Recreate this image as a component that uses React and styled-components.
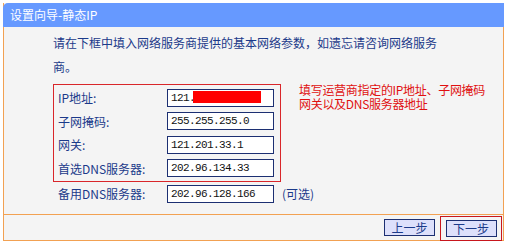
import React from "react";
import styled, { createGlobalStyle } from "styled-components";

const GlobalStyle = createGlobalStyle`
  html, body {
    margin: 0;
    padding: 0;
    background: #ffffff;
  }
  body {
    font-family: "Noto Sans CJK SC", "Liberation Sans", sans-serif;
    font-size: 12px;
  }
`;

const Frame = styled.div`
  margin: 3px 0 0 3px;
  width: 499px;
  height: 237px;
  border: 1px solid #f2a152;
  border-top: none;
  background: #f4f4f4;
  display: flex;
  flex-direction: column;
`;

const TitleBar = styled.div`
  height: 24px;
  margin: 0 -1px;
  background: #6699ff;
  border-top-left-radius: 5px;
  color: #ffffff;
  display: flex;
  align-items: center;
  padding-left: 7px;
  font-size: 12px;
  line-height: 24px;
`;

const Body = styled.div`
  flex: 1;
  padding: 4px 0 0 49px;
  color: #1b3a8a;
`;

const Intro = styled.p`
  margin: 0;
  line-height: 24px;
`;

const FormArea = styled.div`
  display: flex;
  align-items: flex-start;
  margin-top: 5px;
`;

const Fields = styled.div`
  display: flex;
  flex-direction: column;
  flex: none;
  width: 228px;
`;

const Highlight = styled.div`
  border: 1px solid #d9262a;
  padding: 1px 0;
`;

const Row = styled.div`
  display: flex;
  align-items: center;
  height: 23.5px;
  padding-left: ${(p) => (p.$outside ? "5px" : "4px")};
  white-space: nowrap;
`;

const Label = styled.span`
  width: 109px;
  flex: none;
  white-space: nowrap;
`;

const Field = styled.div`
  position: relative;
  width: 102px;
  height: 16px;
  border: 1px solid #1c2f72;
  background: #ffffff;
  color: #111;
  font-family: "Liberation Mono", monospace;
  font-size: 11px;
  letter-spacing: -0.6px;
  line-height: 16px;
  padding-left: 3px;
  flex: none;
`;

const Redact = styled.span`
  position: absolute;
  left: 25px;
  top: 1px;
  width: 68px;
  height: 12px;
  background: #ff0000;
`;

const Optional = styled.span`
  margin-left: 8px;
  flex: none;
  white-space: nowrap;
`;

const Note = styled.div`
  margin: -1px 0 0 18px;
  color: #e01010;
  line-height: 14px;
  white-space: nowrap;
  letter-spacing: -0.3px;
`;

const Footer = styled.div`
  height: 25px;
  border-top: 1px solid #f2a152;
  display: flex;
  align-items: center;
  justify-content: flex-end;
  padding-right: 1px;
`;

const Button = styled.button`
  width: 51px;
  height: 17px;
  padding: 0;
  border: 1px solid #1c2f72;
  background: #dde0fb;
  color: #1b3a8a;
  font-family: inherit;
  font-size: 12px;
  line-height: 14px;
`;

const Marked = styled.div`
  margin-left: 5px;
  width: 62px;
  height: 25px;
  border: 1px solid #c8161d;
  box-sizing: border-box;
  display: flex;
  align-items: center;
  justify-content: center;
  align-self: flex-end;
  margin-bottom: -1px;
`;

export default function App() {
  return (
    <>
      <GlobalStyle />
      <Frame>
        <TitleBar>设置向导-静态IP</TitleBar>
        <Body>
          <Intro>
            请在下框中填入网络服务商提供的基本网络参数，如遗忘请咨询网络服务
            <br />
            商。
          </Intro>
          <FormArea>
            <Fields>
              <Highlight>
                <Row>
                  <Label>IP地址:</Label>
                  <Field>
                    121.
                    <Redact />
                  </Field>
                </Row>
                <Row>
                  <Label>子网掩码:</Label>
                  <Field>255.255.255.0</Field>
                </Row>
                <Row>
                  <Label>网关:</Label>
                  <Field>121.201.33.1</Field>
                </Row>
                <Row>
                  <Label>首选DNS服务器:</Label>
                  <Field>202.96.134.33</Field>
                </Row>
              </Highlight>
              <Row $outside>
                <Label>备用DNS服务器:</Label>
                <Field>202.96.128.166</Field>
                <Optional>(可选)</Optional>
              </Row>
            </Fields>
            <Note>
              填写运营商指定的IP地址、子网掩码
              <br />
              网关以及DNS服务器地址
            </Note>
          </FormArea>
        </Body>
        <Footer>
          <Button>上一步</Button>
          <Marked>
            <Button>下一步</Button>
          </Marked>
        </Footer>
      </Frame>
    </>
  );
}
